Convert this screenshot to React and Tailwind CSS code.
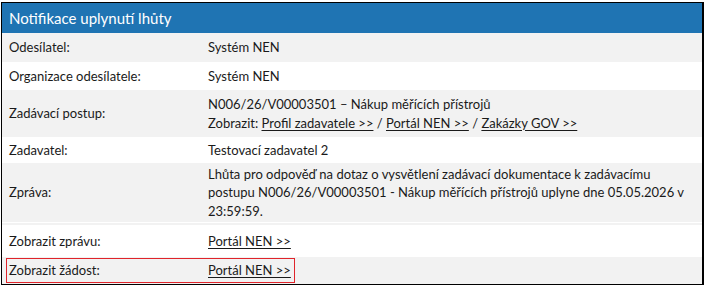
const rows = [
  { label: 'Odesílatel:', h: 'h-[29px]', bg: 'bg-[#f2f2f2]', value: 'Systém NEN' },
  { label: 'Organizace odesílatele:', h: 'h-[28px]', bg: 'bg-white', value: 'Systém NEN' },
]

function Link({ children }) {
  return <a className="underline underline-offset-2 decoration-1">{children}</a>
}

function Row({ label, bg, h, children, extra = '' }) {
  return (
    <div className={`flex items-center ${bg} ${h} ${extra}`}>
      <div className="w-[206px] pl-[7px] shrink-0">{label}</div>
      <div className="flex-1 pr-4">{children}</div>
    </div>
  )
}

export default function App() {
  return (
    <div className="w-[708px] h-[288px] bg-white pt-[2px] pl-[1px]">
      <div
        className="w-[703px] border border-black border-r-2 text-[13px] leading-[18.5px] text-[#1a1a1a]"
        style={{ fontFamily: 'Lato, "Open Sans", sans-serif' }}
      >
        <div className="h-[30px] bg-[#1f74b3] text-white text-[15px] flex items-center pl-[7px]">
          Notifikace uplynutí lhůty
        </div>
        {rows.map((r) => (
          <Row key={r.label} label={r.label} bg={r.bg} h={r.h}>{r.value}</Row>
        ))}
        <Row label="Zadávací postup:" bg="bg-[#f2f2f2]" h="h-[47px]">
          <div>N006/26/V00003501 – Nákup měřících přístrojů</div>
          <div>
            Zobrazit: <Link>Profil zadavatele &gt;&gt;</Link> / <Link>Portál NEN &gt;&gt;</Link> / <Link>Zakázky GOV &gt;&gt;</Link>
          </div>
        </Row>
        <Row label="Zadavatel:" bg="bg-white" h="h-[26px]">Testovací zadavatel 2</Row>
        <div className="bg-[#f2f2f2] h-[62px] flex flex-col">
          <div className="flex items-center flex-1">
            <div className="w-[206px] pl-[7px] shrink-0">Zpráva:</div>
            <div className="flex-1 pr-[16px]">
              Lhůta pro odpověď na dotaz o vysvětlení zadávací dokumentace k zadávacímu postupu N006/26/V00003501 - Nákup měřících přístrojů uplyne dne 05.05.2026 v 23:59:59.
            </div>
          </div>
          <div className="h-px bg-white mb-[2px]" />
        </div>
        <Row label="Zobrazit zprávu:" bg="bg-white" h="h-[32px]">
          <Link>Portál NEN &gt;&gt;</Link>
        </Row>
        <div className="relative">
          <Row label="Zobrazit žádost:" bg="bg-[#f2f2f2]" h="h-[27px]">
            <Link>Portál NEN &gt;&gt;</Link>
          </Row>
          <div className="absolute left-[4px] top-[1px] w-[289px] h-[25px] border border-[#e0242b]" />
        </div>
      </div>
    </div>
  )
}
